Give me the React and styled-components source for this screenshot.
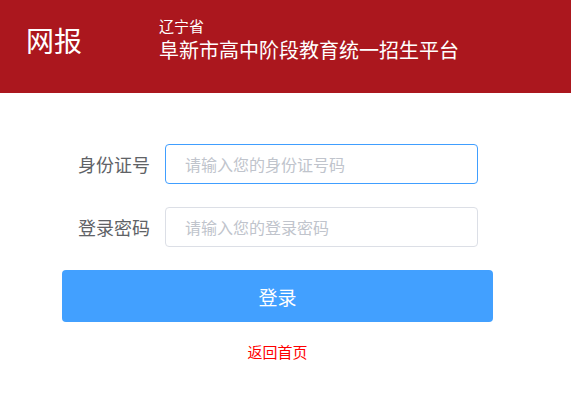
import React from 'react';
import styled, { createGlobalStyle } from 'styled-components';

const GlobalStyle = createGlobalStyle`
  html, body {
    margin: 0;
    padding: 0;
    background: #fff;
    font-family: "Noto Sans CJK SC", "Microsoft YaHei", sans-serif;
  }
  * {
    box-sizing: border-box;
  }
`;

const Header = styled.header`
  height: 93px;
  background: #ab171e;
  display: flex;
  align-items: flex-start;
  padding: 18px 0 0 26px;
  color: #fff;
`;

const Logo = styled.div`
  margin-top: 8px;
  font-size: 28px;
  line-height: 28px;
`;

const TitleBlock = styled.div`
  margin-left: 77px;
  display: flex;
  flex-direction: column;
  gap: 5px;
`;

const Province = styled.div`
  font-size: 15px;
  line-height: 16px;
`;

const Title = styled.div`
  font-size: 20px;
  line-height: 22px;
`;

const Form = styled.form`
  width: 431px;
  margin: 51px 0 0 62px;
  display: flex;
  flex-direction: column;
  gap: 23px;
`;

const Row = styled.div`
  display: grid;
  grid-template-columns: 88px 313px;
  column-gap: 15px;
  align-items: center;
`;

const Label = styled.label`
  text-align: right;
  font-size: 18px;
  line-height: 20px;
  color: #606266;
`;

const Input = styled.input`
  height: 40px;
  width: 100%;
  padding: 0 19px;
  border: 1px solid ${(props) => (props.$active ? '#409eff' : '#dcdfe6')};
  border-radius: 4px;
  font-family: inherit;
  font-size: 16px;
  color: #606266;
  outline: none;
  background: #fff;

  &::placeholder {
    color: #c0c4cc;
  }
`;

const Button = styled.button`
  height: 52px;
  width: 100%;
  margin-top: 0;
  border: none;
  border-radius: 4px;
  background: #42a0ff;
  color: #fff;
  font-family: inherit;
  font-size: 19px;
  cursor: pointer;
`;

const BackLink = styled.a`
  display: block;
  margin-top: -1px;
  text-align: center;
  font-size: 15px;
  line-height: 16px;
  color: #ff0000;
  text-decoration: none;
`;

const App = () => (
  <>
    <GlobalStyle />
    <Header>
      <Logo>网报</Logo>
      <TitleBlock>
        <Province>辽宁省</Province>
        <Title>阜新市高中阶段教育统一招生平台</Title>
      </TitleBlock>
    </Header>
    <Form onSubmit={(e) => e.preventDefault()}>
      <Row>
        <Label>身份证号</Label>
        <Input $active placeholder="请输入您的身份证号码" />
      </Row>
      <Row>
        <Label>登录密码</Label>
        <Input type="password" placeholder="请输入您的登录密码" />
      </Row>
      <Button type="submit">登录</Button>
      <BackLink href="#">返回首页</BackLink>
    </Form>
  </>
);

export default App;
